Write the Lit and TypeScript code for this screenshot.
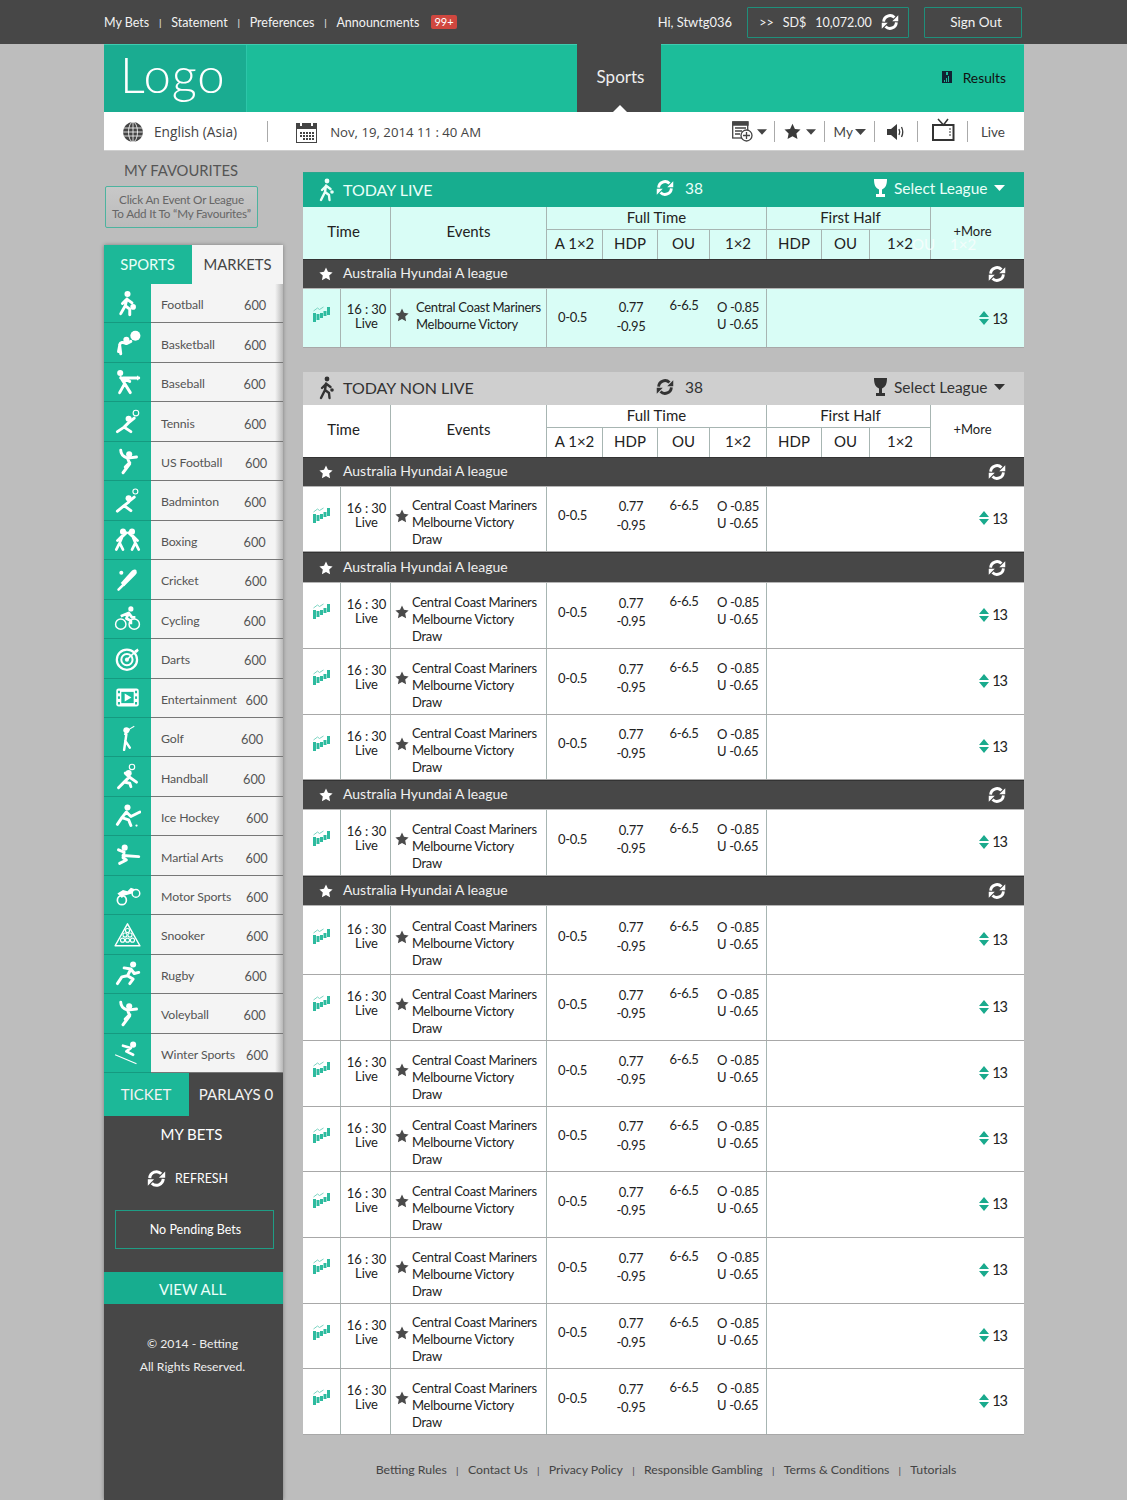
import { LitElement, html, css, svg } from "lit";
import { customElement } from "lit/decorators.js";

const ic = (body: unknown, size = 27) => html`<svg class="sp" width=${size} height=${size} viewBox="0 0 24 24">${body}</svg>`;

const refresh = (size = 18, color = "#fff") => html`<svg width=${size} height=${size} viewBox="0 0 24 24" fill="none" stroke=${color} stroke-width="3.800">
  <path d="M3.500 11.500a8.500 8.500 0 0 1 14.500-5.500" /><path d="M20.500 12.500a8.500 8.500 0 0 1-14.500 5.500" />
  <path d="M23 3v8h-8z" fill=${color} stroke="none"/><path d="M1 21v-8h8z" fill=${color} stroke="none"/>
</svg>`;

const star = (size = 14, color = "#fff") => html`<svg width=${size} height=${size} viewBox="0 0 24 24"><path fill=${color} d="M12 1l3.400 7.300 7.900 1-5.800 5.400 1.500 7.900L12 18.700l-7 3.900 1.500-7.900L.7 9.300l7.900-1z"/></svg>`;

const caret = (w = 11, color = "#444") => html`<svg width=${w} height="6" viewBox="0 0 11 6"><path fill=${color} d="M0 0h11L5.500 6z"/></svg>`;

const runner = (color: string) => html`<svg width="16" height="24" viewBox="0 0 16 24" fill="none" stroke=${color} stroke-width="2.400" stroke-linecap="round" stroke-linejoin="round">
  <circle cx="8" cy="3" r="2.400" fill=${color} stroke="none"/><path d="M7 7.500 6 14l-4 8M6 14l4 3 .5 5M7 8 3 12M7.500 8l4 3"/><circle cx="13" cy="14" r="1.800" fill=${color} stroke="none"/>
</svg>`;

const trophy = (color: string) => html`<svg width="13" height="18" viewBox="0 0 13 18"><path fill=${color} d="M0 0h13c0 6-1.500 9-5 10.500V15h3v3H2v-3h3v-4.500C1.500 9 0 6 0 0z"/></svg>`;

const chartIcon = html`<svg width="17" height="16" viewBox="0 0 17 16"><g fill="#2dbb9f"><path d="M0 7h3v9H0zM3.500 8h3v6h-3zM7 7h3v5H7zM10.500 5h3v5h-3zM14 1h3v8h-3z"/></g><path d="M.5 5l4-3 2 1.500 4-2.500" stroke="#7bd4c2" fill="none"/></svg>`;

const updown = html`<svg width="10" height="14" viewBox="0 0 10 14"><path fill="#1aaa8d" d="M5 0l5 6H0zM0 8h10l-5 6z"/></svg>`;

const g = (head: [number, number] | null, d: string, extra: unknown = "", sw = 2.600) => svg`
  ${head ? svg`<circle cx=${head[0]} cy=${head[1]} r="2.700" fill="#fff"/>` : ""}
  <path d=${d} stroke="#fff" fill="none" stroke-width=${sw} stroke-linecap="round" stroke-linejoin="round"/>${extra}`;
const thin = (s: string) => svg`<g stroke="#fff" fill="none" stroke-width="1">${svg`<path d=${s}/>`}</g>`;

const icons: Record<string, unknown> = {
  football: g([12, 3.500], "M11.500 8 10 14l-4 7M10 14l4 3v5M11 8.500 7.500 12M12 8.500l4 3", svg`<circle cx="17" cy="15" r="2.500" fill="#fff"/>`),
  basketball: g([11, 9.500], "M6 22 5 14q1-3.500 6-1l4-2M5 15l-1 5", svg`<circle cx="19" cy="6" r="4.500" fill="#fff"/>`),
  baseball: g([5.500, 3.500], "M6 7.500 9.500 13 5 21M9.500 13l5 8M6 8l8 3M8 8h14", thin("M21 6v4")),
  tennis: g([13, 9.500], "M13 13l-4 4-6 4M9 17l6 4M13 13l5-4", svg`<circle cx="19.500" cy="4.500" r="2.500" stroke="#fff" fill="none" stroke-width="1"/>`),
  usfootball: g([13.500, 5.500], "M6 2q0 5 6 7l8-1M12 9l2 5-6 8M14 13l-4 4"),
  badminton: g([13, 10], "M13 13.500l-4 3-6 5M9 16.500l6 4.500M13 13l5-4", svg`<circle cx="19" cy="4" r="2.200" stroke="#fff" fill="none" stroke-width="1"/>`),
  boxing: g([8, 5], "M7.500 9 5 15l-3 6M5 15l3 6M8 9l3-3M7 9 3 13M16.500 9l2.500 6 3 6M19 15l-3 6M16 9l-3-3M17 9l4 4", svg`<circle cx="16" cy="5" r="2.700" fill="#fff"/>`, 2.400),
  cricket: svg`<path d="M4 21l5-5" stroke="#fff" stroke-width="2.200" stroke-linecap="round"/><path d="M9 18l-3-3L16 4q3-2 4 0 1 2-1 4z" fill="#fff"/><circle cx="6.500" cy="6" r="1.800" fill="#fff"/>`,
  cycling: svg`<circle cx="6" cy="17" r="4.600" stroke="#fff" fill="none" stroke-width="1.300"/><circle cx="18" cy="17" r="4.600" stroke="#fff" fill="none" stroke-width="1.300"/><circle cx="15" cy="3.500" r="2.300" fill="#fff"/><path d="M6 10l7-3 3 4h3M13 7l-2 5 4 2v3" stroke="#fff" stroke-width="2.400" fill="none" stroke-linejoin="round"/>`,
  darts: svg`<circle cx="11.500" cy="13" r="9" stroke="#fff" fill="none" stroke-width="2"/><circle cx="11.500" cy="13" r="5" stroke="#fff" fill="none" stroke-width="1.800"/><circle cx="11.500" cy="13" r="1.800" fill="#fff"/><path d="M12 12.500 20 5" stroke="#fff" stroke-width="1.400"/><path d="M18 5l3-2 1 2-2 2z" fill="#fff"/>`,
  entertainment: svg`<rect x="2" y="4" width="20" height="16" rx="2" fill="#fff"/><rect x="6.500" y="7" width="11" height="10" fill="#1abc9c"/><path d="M9.500 8.500v7l6-3.500z" fill="#fff"/><g fill="#1abc9c"><rect x="3.500" y="6" width="1.800" height="2.200"/><rect x="3.500" y="11" width="1.800" height="2.200"/><rect x="3.500" y="16" width="1.800" height="2.200"/><rect x="18.700" y="6" width="1.800" height="2.200"/><rect x="18.700" y="11" width="1.800" height="2.200"/><rect x="18.700" y="16" width="1.800" height="2.200"/></g>`,
  golf: g([11, 5.500], "M11 9l-1 7-1 7M10 15l4 6M10 9l3-4", thin("M13 5l5-3"), 2.200),
  handball: g([13, 9], "M13 13 9 17l-5 5M9 17l5 1 1 3M13 12l7 5M13 12l-3-3", svg`<circle cx="16" cy="3.500" r="2.400" stroke="#fff" fill="none" stroke-width="1"/>`),
  hockey: g([12, 4], "M11 8 7 13l-4 6M7 13l6 2 2 5M11 8l4 4 8-4", svg`<circle cx="20" cy="20" r="1" fill="#fff"/>`),
  martial: g([9.500, 5], "M9 9l-1 5 3 2-6 3M8 12l14 1M9 9l-5-2"),
  motor: svg`<circle cx="7" cy="17" r="4" stroke="#fff" fill="none" stroke-width="1.500"/><circle cx="19.500" cy="11" r="3.400" stroke="#fff" fill="none" stroke-width="1.300"/><path d="M3 11l5-3 4 1 3-3 3 1-2 4-7 2-2 2z" fill="#fff"/>`,
  snooker: svg`<path d="M12 2.500 23 22H1z" stroke="#fff" fill="none" stroke-width="1.300" stroke-linejoin="round"/><g stroke="#fff" fill="none" stroke-width="1"><circle cx="12" cy="8.500" r="1.800"/><circle cx="9.800" cy="12.500" r="1.800"/><circle cx="14.200" cy="12.500" r="1.800"/><circle cx="7.600" cy="17" r="1.800"/><circle cx="12" cy="17" r="1.800"/><circle cx="16.400" cy="17" r="1.800"/></g>`,
  rugby: g([17, 4], "M15 8 9 7M15 8l-3 6-5 1-4 6M12 14l5 3-3 4M15 8l3 4 4-1"),
  volleyball: g([13.500, 5.500], "M6 2q0 5 6 7l8-1M12 9l2 5-6 8M14 13l-4 4"),
  winter: g([17, 5], "M15 8l-7-2M15 8l-4 3 6 3", thin("M1 14l19 8"), 2.400),
};

const sports: [string, string, number][] = [
  ["Football", "football", 93], ["Basketball", "basketball", 93], ["Baseball", "baseball", 92.500], ["Tennis", "tennis", 93],
  ["US Football", "usfootball", 94], ["Badminton", "badminton", 93], ["Boxing", "boxing", 92.500], ["Cricket", "cricket", 93.500],
  ["Cycling", "cycling", 92.500], ["Darts", "darts", 93], ["Entertainment", "entertainment", 94.500], ["Golf", "golf", 90],
  ["Handball", "handball", 92], ["Ice Hockey", "hockey", 95], ["Martial Arts", "martial", 94.500], ["Motor Sports", "motor", 95],
  ["Snooker", "snooker", 95], ["Rugby", "rugby", 93.500], ["Voleyball", "volleyball", 92.500], ["Winter Sports", "winter", 95],
];

type Item = { league: true; h: number } | { league?: false; h: number };
const nonLive: Item[] = [
  { league: true, h: 30 }, { h: 65 },
  { league: true, h: 31 }, { h: 66 }, { h: 66 }, { h: 65 },
  { league: true, h: 30 }, { h: 66 },
  { league: true, h: 30 }, { h: 69 }, { h: 66 }, { h: 66 }, { h: 65 }, { h: 66 }, { h: 66 }, { h: 65 }, { h: 66 },
];

@customElement("app-root")
export class AppRoot extends LitElement {
  static styles = css`
    :host { display: block; width: 1127px; height: 1500px; overflow: hidden; background: #bdbdbd; font-family: Lato, "Open Sans", "Liberation Sans", sans-serif; color: #222; font-size: 13px; }
    * { box-sizing: border-box; }
    svg { display: block; flex: none; }
    .top { height: 44px; background: #474747; color: #f2f2f2; display: flex; align-items: center; padding: 0 105px 0 104px; font-size: 12.500px; }
    .nav { display: flex; align-items: center; }
    .nav i { font-style: normal; font-size: 10px; width: 22px; text-align: center; }
    .badge { background: #d0473f; color: #fff; border-radius: 2px; font-size: 11px; height: 14px; line-height: 14px; padding: 0 3px; margin-left: 12px; }
    .grow { flex: 1; }
    .hi { font-size: 12.900px; margin-right: 15px; }
    .box { height: 31px; border: 1px solid #1f8f7b; border-radius: 1px; display: flex; align-items: center; justify-content: center; }
    .bal { width: 162px; gap: 9px; font-size: 12.500px; padding-left: 2px; }
    .signout { width: 98px; margin-left: 15px; font-size: 13.500px; padding-left: 6px; }
    .page { width: 920px; margin-left: 104px; }
    .hdr { height: 68px; background: #1cbd9a; border-top: 1px solid #3fcbb0; display: flex; }
    .logo { width: 143px; background: #1aac91; border-right: 1px solid #2cc6a9; color: #fff; font-size: 49px; font-weight: 300; display: flex; align-items: center; padding: 0 0 10px 16px; letter-spacing: 1px; }
    .tab { margin-left: 330px; width: 84px; margin-top: -1px; background: #474747; color: #eee; font-size: 17px; display: flex; align-items: center; justify-content: center; padding: 0 0 3px 3px; position: relative; }
    .tab::after { content: ""; position: absolute; bottom: 0; left: 36px; border: 7px solid transparent; border-top: 0; border-bottom-color: #fff; }
    .res { flex: 1; display: flex; align-items: center; justify-content: flex-end; gap: 11px; padding-right: 18px; font-size: 13.800px; color: #111; padding-bottom: 3px; }
    .bar { height: 39px; background: #fff; border-bottom: 1px solid #cfcfcf; display: flex; align-items: center; color: #444; font-size: 13.700px; font-family: "Open Sans", sans-serif; padding: 1px 0 0 18px; }
    .sep { width: 1px; height: 21px; background: #aaa; flex: none; }
    .date { font-size: 13.200px; margin-left: 12px; }
    .tools { margin-left: auto; display: flex; align-items: center; padding-right: 19px; font-family: Lato, sans-serif; font-size: 13.500px; }
    .cols { display: grid; grid-template-columns: 179px 721px; gap: 20px; height: 1349px; }
    .side { display: flex; flex-direction: column; }
    .fav { height: 94px; color: #555; }
    .fav h3 { margin: 0; font-size: 14.800px; font-weight: 400; padding: 11px 0 0 20px; line-height: 17px; height: 35px; }
    .favbox { margin-left: 1px; width: 153px; height: 42px; border: 1px solid #4db39f; border-radius: 2px; font-size: 11.700px; line-height: 14px; text-align: center; padding-top: 5px; color: #666; background: linear-gradient(#c8c8c8, #bbb); letter-spacing: -.2px; }
    .panel { flex: 1; background: #474747; box-shadow: 0 0 4px rgba(0,0,0,.35); display: flex; flex-direction: column; color: #fff; }
    .tabs { height: 39px; display: grid; grid-template-columns: 88px 1fr; font-size: 14.800px; line-height: 39px; text-align: center; background: #f4f4f4; color: #444; }
    .tabs .on { background: #1cb898; color: #e8fff9; padding-right: 1px; }
    .list { height: 789px; display: grid; grid-auto-rows: 1fr; background: #f4f4f4; }
    .row { display: grid; grid-template-columns: 47px 1fr; border-bottom: 1px solid #777; background: linear-gradient(to right, #f4f4f4 calc(100% - 8px), #b8b8b8); color: #555; font-size: 12.300px; letter-spacing: -.1px; }
    .ico { background: #1cb898; display: flex; align-items: center; justify-content: center; border-bottom: 1px solid #159a80; margin-bottom: -1px; }
    .lab { position: relative; display: flex; align-items: center; padding: 3px 0 0 10px; }
    .cnt { position: absolute; top: 50%; transform: translateY(-50%); margin-top: 2px; font-size: 12.800px; letter-spacing: 0; }
    .tk { height: 43px; display: grid; grid-template-columns: 85px 1fr; font-size: 15px; line-height: 43px; text-align: center; color: #f2f2f2; }
    .tk .on { background: #1cb898; padding-right: 1px; }
    .mybets { height: 36px; font-size: 15px; line-height: 36px; text-align: center; margin-right: 4px; }
    .refresh { height: 52px; display: flex; align-items: center; justify-content: center; gap: 9px; font-size: 12.400px; margin-right: 12px; }
    .pend { margin: 6px 9px 0 11px; height: 39px; border: 1px solid #1f9d85; display: flex; align-items: center; justify-content: center; font-size: 12.500px; padding: 0 0 1px 2px; }
    .view { margin-top: 23px; height: 32px; background: #17ad8f; font-size: 15px; line-height: 34px; text-align: center; color: #eafff9; padding-right: 2px; }
    .copy { margin-top: 28px; padding-right: 2px; text-align: center; font-size: 12.200px; line-height: 23px; color: #eee; }
    .main { padding-top: 21px; color: #222; }
    .title { height: 35px; display: grid; grid-template-columns: 353px 1fr 150px; align-items: center; font-size: 15.500px; background: #17ad8f; color: #eafff9; border-top: 1px solid #2aa68e; }
    .title.nl { height: 33px; background: #cfcfcf; color: #333; border-top: 0; }
    .tl { display: flex; align-items: center; gap: 8px; padding: 0 0 1px 16px; font-size: 16px; }
    .tl span { padding-bottom: 1px; }
    .tc { display: flex; align-items: center; gap: 11px; padding-bottom: 4px; }
    .tr { display: flex; align-items: center; gap: 7px; padding-bottom: 4px; }
    .head { height: 52px; display: grid; grid-template-columns: 88px 156px 56px 55px 52px 57px 55px 48px 61px 93px; grid-template-rows: 23px 29px; font-size: 15px; position: relative; background: #fff; }
    .head.lv { background: #d9fdf6; }
    .head > div { display: flex; align-items: center; justify-content: center; border-right: 1px solid #a7b5b2; padding-bottom: 3px; }
    .head > .sp2 { grid-row: span 2; padding-bottom: 4px; }
    .head > .tm { padding-right: 6px; }
    .head > .ft { grid-column: span 4; border-bottom: 1px solid #a7b5b2; padding-bottom: 2px; }
    .head > .fh { grid-column: span 3; border-bottom: 1px solid #a7b5b2; padding: 0 0 3px 4px; }
    .head > .more { grid-row: span 2; border-right: 0; font-size: 13px; padding: 0 10px 5px 0; }
    .ghost { position: absolute; top: 23px; height: 29px; line-height: 29px; color: #fff; font-size: 15px; opacity: .7; }
    .league { background: #474747; border-top: 1px solid #333; border-bottom: 1px solid #b5b5b5; color: #f0f0f0; display: flex; align-items: center; font-size: 14px; padding: 0 18px 0 16px; gap: 10px; }
    .league .lt { padding-bottom: 3px; }
    .league .rf { margin-left: auto; }
    .game { display: grid; grid-template-columns: 38px 50px 156px 56px 55px 52px 57px 1fr; background: #fff; border-bottom: 1px solid #a8a8a8; font-size: 13px; line-height: 17px; letter-spacing: -.3px; }
    .game.lv { background: #d9fdf6; }
    .game > div { display: flex; flex-direction: column; align-items: center; justify-content: center; border-right: 1px solid #a7b5b2; padding-bottom: 9px; }
    .game > .nb { border-right: 0; }
    .game > .ct { line-height: 14px; font-size: 13px; text-align: center; padding-left: 2px; letter-spacing: -.1px; }
    .game.lv > .ct { padding-bottom: 4px; }
    .game > .ev { flex-direction: row; justify-content: flex-start; padding: 7px 0 0 4px; gap: 3px; white-space: nowrap; }
    .game.lv > .ev { gap: 7px; padding: 0 0 4px 4px; }
    .ev > svg { margin-top: -14px; }
    .game.lv .ev > svg { margin-top: -2px; }
    .ev span { display: block; }
    .game > .hcp { padding: 0 5px 7px 0; }
    .game > .hh { line-height: 18.500px; padding: 0 0 7px 1px; text-align: center; }
    .game > .ou { padding-bottom: 28px; }
    .game > .uo { padding-bottom: 9px; }
    .game.lv > .hcp { padding-bottom: 1px; }
    .game.lv > .hh { padding-bottom: 3px; }
    .game.lv > .ou { padding-bottom: 26px; }
    .game.lv > .uo { padding-bottom: 5px; }
    .game > .last { flex-direction: row; justify-content: flex-end; gap: 3px; padding: 0 17px 2px 0; font-size: 14.500px; border-right: 0; letter-spacing: -1px; }
    .game.lv > .last { padding-bottom: 0; }
    .foot { margin-top: 27px; display: flex; justify-content: center; font-size: 12.300px; color: #444; padding-left: 5px; }
    .foot i { font-style: normal; font-size: 10px; width: 21px; text-align: center; line-height: 16px; }
  `;

  private headRow(live: boolean) {
    return html`<div class="head ${live ? "lv" : ""}">
      <div class="sp2 tm">Time</div><div class="sp2">Events</div>
      <div class="ft">Full Time</div><div class="fh">First Half</div><div class="more">+More</div>
      <div>A 1×2</div><div>HDP</div><div>OU</div><div>1×2</div>
      <div>HDP</div><div>OU</div><div>1×2</div>
      ${live ? html`<span class="ghost" style="left:609px">OU</span><span class="ghost" style="left:647px">1×2</span>` : ""}
    </div>`;
  }

  private game(h: number, live: boolean) {
    return html`<div class="game ${live ? "lv" : ""}" style="height:${h}px">
      <div>${chartIcon}</div>
      <div class="ct">16 : 30<br />Live</div>
      <div class="ev">${star(14, "#4a4a4a")}<span><span>Central Coast Mariners</span><span>Melbourne Victory</span>${live ? "" : html`<span>Draw</span>`}</span></div>
      <div class="nb hcp">0-0.5</div>
      <div class="nb hh">0.77<br />-0.95</div>
      <div class="nb ou">6-6.5</div>
      <div class="uo">O -0.85<br />U -0.65</div>
      <div class="last">${updown}<span>13</span></div>
    </div>`;
  }

  private league(h: number) {
    return html`<div class="league" style="height:${h}px">${star(14)}<span class="lt">Australia Hyundai A league</span><span class="rf">${refresh(18)}</span></div>`;
  }

  render() {
    return html`
      <div class="top">
        <div class="nav">My Bets<i>|</i>Statement<i>|</i>Preferences<i>|</i>Announcments<span class="badge">99+</span></div>
        <div class="grow"></div>
        <span class="hi">Hi, Stwtg036</span>
        <div class="box bal"><span>&gt;&gt;</span><span>SD$</span><span>10,072.00</span>${refresh(18)}</div>
        <div class="box signout">Sign Out</div>
      </div>
      <div class="page">
        <div class="hdr">
          <div class="logo">Logo</div>
          <div class="tab">Sports</div>
          <div class="res">
            <svg width="10" height="12" viewBox="0 0 10 12"><path fill="#123" d="M0 0h10v12H0z"/><path fill="#1cbd9a" d="M2 9h1v2H2zM4 7h1v4H4zM6 5h1v6H6z"/><path fill="#1cbd9a" d="M4 1h2v3H4z"/></svg>
            <span>Results</span>
          </div>
        </div>
        <div class="bar">
          <svg width="22" height="20" viewBox="0 0 22 20"><circle cx="11" cy="10" r="10" fill="#444"/><g stroke="#fff" stroke-width=".8" fill="none"><ellipse cx="11" cy="10" rx="4.500" ry="10"/><path d="M11 0v20M1 6h20M0 10h22M1 14h20"/></g></svg>
          <span style="margin-left:10px">English (Asia)</span>
          <span class="sep" style="margin-left:30px"></span>
          <svg style="margin-left:28px" width="22" height="22" viewBox="0 0 22 22"><rect x=".5" y="2.500" width="20" height="19" fill="#fff" stroke="#444"/><rect x="1" y="3" width="19" height="5" fill="#444"/><path fill="#fff" d="M4 1h2v4H4zM15 1h2v4h-2z"/><path fill="#444" d="M4 11h2v2H4zM7 11h2v2H7zM10 11h2v2h-2zM13 11h2v2h-2zM16 11h2v2h-2zM4 14h2v2H4zM7 14h2v2H7zM10 14h2v2h-2zM13 14h2v2h-2zM16 14h2v2h-2zM7 17h2v2H7zM10 17h2v2h-2zM13 17h2v2h-2zM16 17h2v2h-2z"/></svg>
          <span class="date">Nov, 19, 2014 11 : 40 AM</span>
          <div class="tools">
            <svg width="21" height="21" viewBox="0 0 21 21" fill="none" stroke="#444" stroke-width="1.300"><rect x=".7" y="1" width="15" height="16" fill="#fff"/><path fill="#444" d="M1 1h15v3H1z"/><path d="M3 7h11M3 10h7M3 13h5"/><circle cx="14.500" cy="14.500" r="5.500" fill="#fff"/><path d="M14.500 11v7M11 14.500h7"/></svg>
            <span style="margin-left:4px">${caret(10)}</span>
            <span class="sep" style="margin-left:7px"></span>
            <span style="margin-left:9px">${star(17, "#3a3a3a")}</span>
            <span style="margin-left:5px">${caret(10)}</span>
            <span class="sep" style="margin-left:8px"></span>
            <span style="margin-left:9px">My</span>
            <span style="margin-left:2px">${caret(11)}</span>
            <span class="sep" style="margin-left:8px"></span>
            <svg style="margin-left:12px" width="18" height="16" viewBox="0 0 18 16"><path fill="#3a3a3a" d="M0 5h4l6-5v16l-6-5H0z"/><path d="M12 5q1.500 3 0 6M14.500 3q2.500 5 0 10" stroke="#3a3a3a" fill="none" stroke-width="1.300"/></svg>
            <span class="sep" style="margin-left:12px"></span>
            <svg style="margin-left:14px;margin-top:-5px" width="23" height="23" viewBox="0 0 23 23" fill="none" stroke="#333" stroke-width="2"><rect x="1" y="7" width="20.500" height="15"/><path d="M6 1l5.500 6L16 1" stroke-width="1.500"/><path d="M18 10v9" stroke-width="1" stroke-dasharray="2 1"/></svg>
            <span class="sep" style="margin-left:12px"></span>
            <span style="margin-left:13px">Live</span>
          </div>
        </div>
        <div class="cols">
          <div class="side">
            <div class="fav">
              <h3>MY FAVOURITES</h3>
              <div class="favbox">Click An Event Or League<br />To Add It To “My Favourites”</div>
            </div>
            <div class="panel">
              <div class="tabs"><div class="on">SPORTS</div><div>MARKETS</div></div>
              <div class="list">
                ${sports.map(([n, k, x]) => html`<div class="row"><div class="ico">${ic(icons[k])}</div><div class="lab"><span>${n}</span><span class="cnt" style="left:${x}px">600</span></div></div>`)}
              </div>
              <div class="tk"><div class="on">TICKET</div><div>PARLAYS 0</div></div>
              <div class="mybets">MY BETS</div>
              <div class="refresh">${refresh(19)}<span>REFRESH</span></div>
              <div class="pend">No Pending Bets</div>
              <div class="view">VIEW ALL</div>
              <div class="copy">© 2014 - Betting<br />All Rights Reserved.</div>
            </div>
          </div>
          <div class="main">
            <div class="title">
              <div class="tl">${runner("#eafff9")}<span>TODAY LIVE</span></div>
              <div class="tc">${refresh(18)}<span>38</span></div>
              <div class="tr">${trophy("#fff")}<span>Select League</span>${caret(11, "#fff")}</div>
            </div>
            ${this.headRow(true)}
            ${this.league(30)}
            ${this.game(59, true)}
            <div style="height:24px"></div>
            <div class="title nl">
              <div class="tl">${runner("#333")}<span>TODAY NON LIVE</span></div>
              <div class="tc">${refresh(18, "#333")}<span>38</span></div>
              <div class="tr">${trophy("#333")}<span>Select League</span>${caret(11, "#333")}</div>
            </div>
            ${this.headRow(false)}
            ${nonLive.map((it) => (it.league ? this.league(it.h) : this.game(it.h, false)))}
            <div class="foot">Betting Rules<i>|</i>Contact Us<i>|</i>Privacy Policy<i>|</i>Responsible Gambling<i>|</i>Terms &amp; Conditions<i>|</i>Tutorials</div>
          </div>
        </div>
      </div>
    `;
  }
}
